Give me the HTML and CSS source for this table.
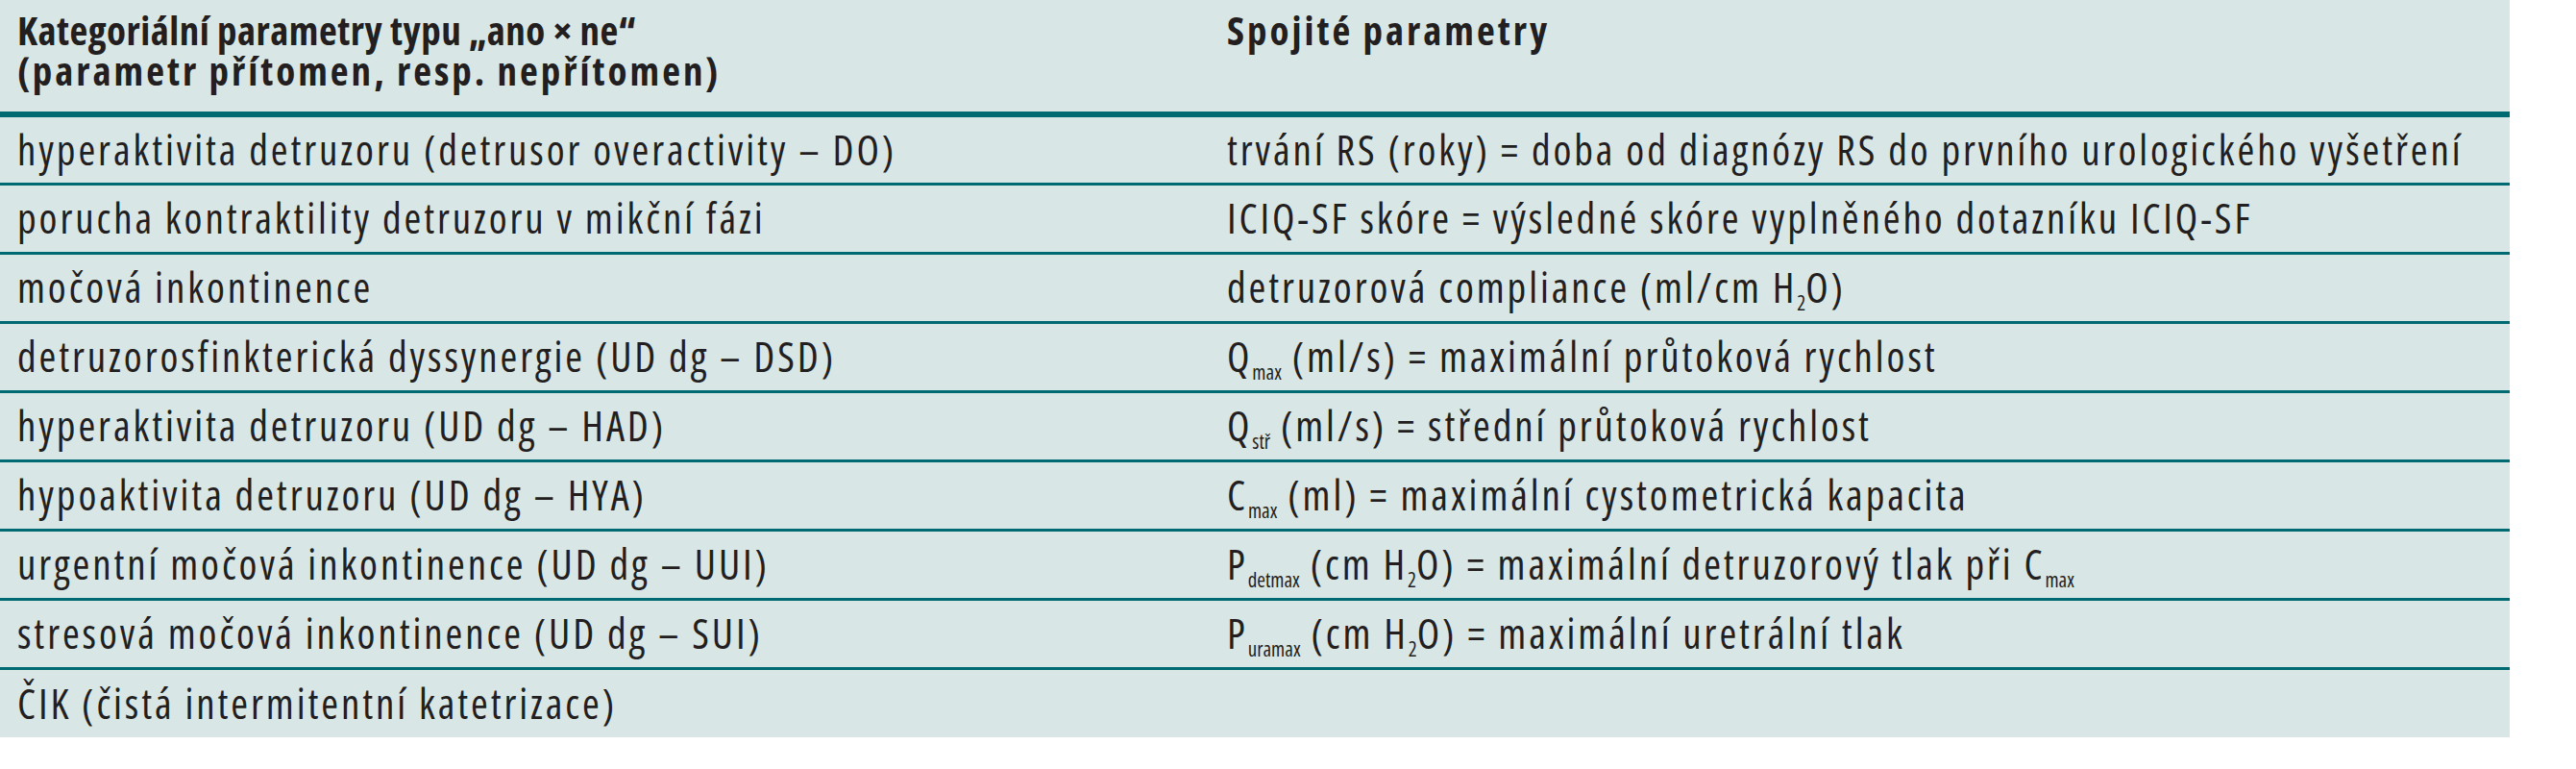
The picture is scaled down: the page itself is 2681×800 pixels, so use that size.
FILE: index.html
```html
<!DOCTYPE html>
<html lang="cs">
<head>
<meta charset="utf-8">
<title>Parametry</title>
<link rel="stylesheet" href="styles.css">
</head>
<body>
<table class="params">
  <thead>
    <tr>
      <th class="col1"><span class="head-first">Kategoriální parametry typu „ano × ne“</span><br>(parametr přítomen, resp. nepřítomen)</th>
      <th class="col2">Spojité parametry</th>
    </tr>
  </thead>
  <tbody>
    <tr><td>hyperaktivita detruzoru (detrusor overactivity – DO)</td><td>trvání RS (roky) = doba od diagnózy RS do prvního urologického vyšetření</td></tr>
    <tr><td>porucha kontraktility detruzoru v mikční fázi</td><td>ICIQ-SF skóre = výsledné skóre vyplněného dotazníku ICIQ-SF</td></tr>
    <tr><td>močová inkontinence</td><td>detruzorová compliance (ml/cm H<sub>2</sub>O)</td></tr>
    <tr><td>detruzorosfinkterická dyssynergie (UD dg – DSD)</td><td>Q<sub>max</sub> (ml/s) = maximální průtoková rychlost</td></tr>
    <tr><td>hyperaktivita detruzoru (UD dg – HAD)</td><td>Q<sub>stř</sub> (ml/s) = střední průtoková rychlost</td></tr>
    <tr><td>hypoaktivita detruzoru (UD dg – HYA)</td><td>C<sub>max</sub> (ml) = maximální cystometrická kapacita</td></tr>
    <tr><td>urgentní močová inkontinence (UD dg – UUI)</td><td>P<sub>detmax</sub> (cm H<sub>2</sub>O) = maximální detruzorový tlak při C<sub>max</sub></td></tr>
    <tr><td>stresová močová inkontinence (UD dg – SUI)</td><td>P<sub>uramax</sub> (cm H<sub>2</sub>O) = maximální uretrální tlak</td></tr>
    <tr class="last"><td>ČIK (čistá intermitentní katetrizace)</td><td></td></tr>
  </tbody>
</table>
</body>
</html>
```
FILE: styles.css
```css
html, body {
  margin: 0;
  padding: 0;
  background: #ffffff;
}
body {
  font-family: "Open Sans", "DejaVu Sans Condensed", sans-serif;
  font-stretch: 75%;
  color: #231f20;
}
.params {
  width: 2612px;
  border-collapse: collapse;
  background: #d9e6e6;
  table-layout: fixed;
}
.params th {
  font-size: 41px;
  font-weight: bold;
  letter-spacing: 3px;
  text-align: left;
  vertical-align: top;
  line-height: 42px;
  height: 119px;
  box-sizing: border-box;
  padding: 10px 18px 0 18px;
  border-bottom: 6px solid #006a72;
}
.params .head-first {
  letter-spacing: 0.5px;
}
.params .col1 { width: 1259px; }
.params td {
  font-size: 43px;
  letter-spacing: 2.9px;
  height: 72px;
  box-sizing: border-box;
  padding: 0 18px;
  vertical-align: middle;
  line-height: 42px;
  white-space: nowrap;
  border-bottom: 3px solid #006a72;
}
.params tr.last td {
  border-bottom: none;
}
sub {
  font-size: 21px;
  line-height: 0;
  vertical-align: -8px;
  letter-spacing: 0;
}
```
